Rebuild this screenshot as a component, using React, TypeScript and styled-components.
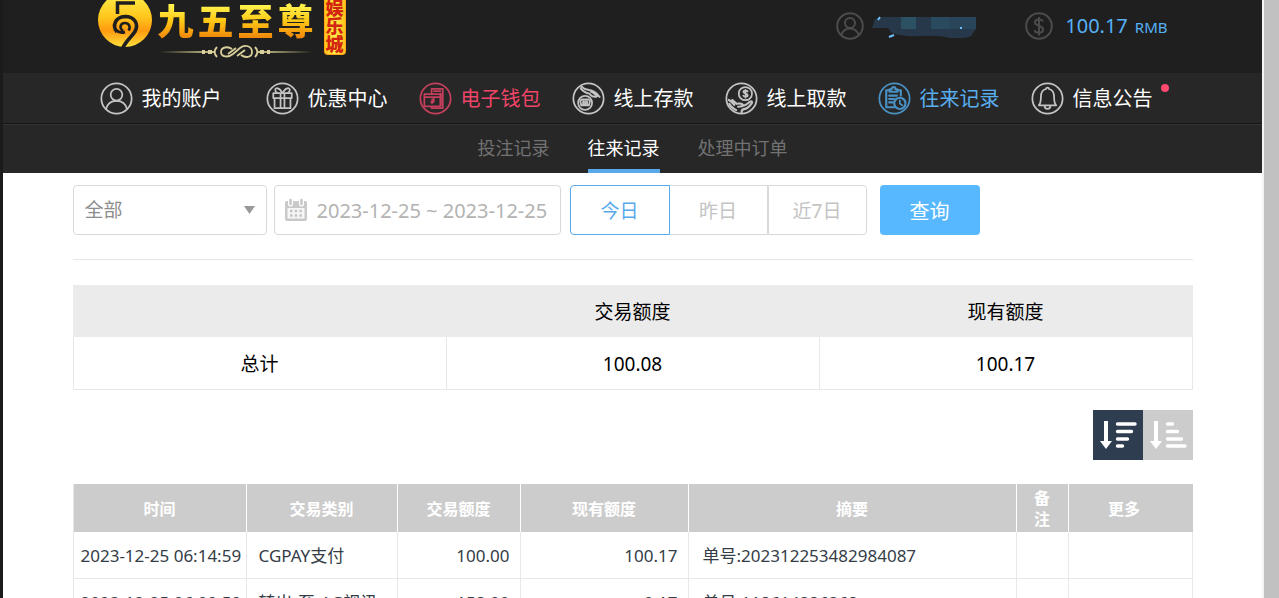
import React from "react";
import styled, { createGlobalStyle, css } from "styled-components";

const GlobalStyle = createGlobalStyle`
  *, *::before, *::after { box-sizing: border-box; }
  body {
    margin: 0;
    background: #fff;
    font-family: "Noto Sans", "Noto Sans CJK SC", sans-serif;
    color: #000;
  }
  button, input, select { font-family: inherit; }
`;

const Frame = styled.div`
  display: flex;
  height: 100vh;
  overflow: hidden;
  border-left: 3px solid #1b1a1c;
`;

const Page = styled.div`
  flex: 1;
  min-width: 0;
  overflow: hidden;
`;

const ScrollTrack = styled.div`
  width: 17px;
  flex: none;
  border-left: 2px solid #f4f4f4;
  background: #c1c1c1;
`;

const Container = styled.div`
  width: 100%;
  max-width: 1120px;
  margin: 0 auto;
`;

const Header = styled.header`
  height: 73px;
  overflow: hidden;
  background: #1f1f1f;
`;

const HeaderInner = styled(Container)`
  display: flex;
  justify-content: space-between;
  align-items: flex-start;
  padding: 0 25px;
`;

const Logo = styled.a`
  display: flex;
  align-items: flex-start;
  height: 73px;
  text-decoration: none;
`;

const LogoMark = styled.svg`
  width: 54px;
  height: 50px;
`;

const LogoWords = styled.div`
  display: flex;
  flex-direction: column;
  margin: 0 10px 0 6px;
`;

const LogoName = styled.div`
  display: flex;
  gap: 4px;
  height: 42px;
  font-family: "Noto Sans CJK SC", sans-serif;
  font-size: 36px;
  line-height: 38px;
  font-weight: 900;
  span {
    background: linear-gradient(#fff04a 15%, #ffc814 50%, #f08a0c 88%);
    background-clip: text;
    -webkit-background-clip: text;
    color: transparent;
  }
`;

const Flourish = styled.svg`
  width: 156px;
  height: 18px;
`;

const LogoBadge = styled.div`
  display: flex;
  align-items: center;
  justify-content: flex-end;
  writing-mode: vertical-rl;
  width: 22px;
  height: 55px;
  padding-bottom: 1px;
  border-radius: 0 0 4px 4px;
  border: 1px solid #ffa516;
  border-top: 0;
  background: linear-gradient(90deg, #ffc21a, #fff04a 50%, #ffc21a);
  color: #d3240f;
  font-family: "Noto Sans CJK SC", sans-serif;
  font-weight: 900;
  font-size: 18px;
  line-height: 20px;
  white-space: nowrap;
`;

const Account = styled.div`
  display: flex;
  align-items: center;
  height: 52px;
`;

const AccountIcon = styled.svg`
  width: 28px;
  height: 28px;
  fill: none;
  stroke: #4c4c4c;
  stroke-width: 2;
`;

const MaskedName = styled.svg`
  width: 106px;
  height: 24px;
  margin: 0 49px 0 6px;
`;

const Balance = styled.span`
  margin-left: 12px;
  color: #57b1f5;
  font-size: 20px;
  line-height: 28px;
  small {
    margin-left: 7px;
    font-size: 15px;
  }
`;

const Nav = styled.nav`
  height: 51px;
  background: #272727;
  border-bottom: 1px solid #151515;
`;

const NavList = styled(Container)`
  display: flex;
  gap: 31px;
  padding-left: 27px;
`;

const tones = { plain: "#fff", hot: "#f04468", active: "#58aef0" };
const iconTones = { plain: "#c4c4c4", hot: "#c43f5c", active: "#4a92c4" };
type Tone = keyof typeof tones;

const NavLink = styled.a<{ $tone: Tone; $spaced?: boolean }>`
  position: relative;
  display: flex;
  flex: none;
  align-items: center;
  gap: 9px;
  height: 50px;
  margin-right: ${(p) => (p.$spaced ? "13px" : "0")};
  color: ${(p) => tones[p.$tone]};
  font-size: 20px;
  line-height: 30px;
  text-decoration: none;
  span { padding-top: 2px; }
  svg {
    width: 33px;
    height: 33px;
    fill: none;
    stroke: ${(p) => iconTones[p.$tone]};
    stroke-width: 1.8;
    stroke-linejoin: round;
    stroke-linecap: round;
  }
`;

const Dot = styled.i`
  position: absolute;
  top: 11px;
  right: -16px;
  width: 8px;
  height: 8px;
  border-radius: 50%;
  background: #ff4a70;
`;

const SubNav = styled.nav`
  display: flex;
  justify-content: center;
  gap: 38px;
  height: 49px;
  border-top: 1px solid #343434;
  background: #272727;
`;

const SubLink = styled.a<{ $active?: boolean }>`
  height: 48px;
  border-bottom: 4px solid ${(p) => (p.$active ? "#57a9ec" : "transparent")};
  color: ${(p) => (p.$active ? "#fff" : "#727272")};
  font-size: 18px;
  line-height: 46px;
  text-decoration: none;
`;

const Content = styled(Container).attrs({ as: "main" })`
  padding-top: 12px;
`;

const Filters = styled.form`
  display: flex;
  padding-bottom: 24px;
  margin-bottom: 25px;
  border-bottom: 1px solid #e6e6e6;
`;

const field = css`
  height: 50px;
  border: 1px solid #d9d9d9;
  border-radius: 4px;
  background: #fff;
`;

const SelectBox = styled.label`
  ${field}
  display: flex;
  align-items: center;
  width: 194px;
  margin-right: 7px;
  padding: 0 11px;
  select {
    flex: 1;
    height: 48px;
    padding: 0;
    border: 0;
    appearance: none;
    background: transparent;
    color: #8c8c8c;
    font-size: 19px;
  }
  svg { width: 11px; height: 8px; fill: #999; }
`;

const DateBox = styled.label`
  ${field}
  display: flex;
  align-items: center;
  gap: 10px;
  width: 287px;
  margin-right: 9px;
  padding-left: 10px;
  svg { flex: none; width: 22px; height: 24px; }
  input {
    flex: 1;
    min-width: 0;
    height: 48px;
    padding: 0;
    border: 0;
    background: transparent;
    color: #b3b3b3;
    font-size: 20px;
  }
`;

const DayGroup = styled.div`
  display: flex;
  margin-right: 13px;
`;

const DayButton = styled.button<{ $active?: boolean }>`
  width: 99px;
  height: 50px;
  padding: 0;
  border: 1px solid ${(p) => (p.$active ? "#57a9ec" : "#d9d9d9")};
  background: #fff;
  color: ${(p) => (p.$active ? "#57a9ec" : "#c3c3c3")};
  font-size: 19px;
  &:first-child { width: 100px; border-radius: 4px 0 0 4px; }
  &:nth-child(2) { width: 98px; border-left: 0; }
  &:last-child { border-radius: 0 4px 4px 0; }
`;

const QueryButton = styled.button`
  width: 100px;
  height: 50px;
  padding: 0;
  border: 0;
  border-radius: 4px;
  background: #57b8ff;
  color: #fff;
  font-size: 20px;
`;

const SummaryTable = styled.table`
  width: 100%;
  table-layout: fixed;
  border-collapse: collapse;
  font-size: 19px;
  line-height: 28px;
  text-align: center;
  th {
    height: 51px;
    padding: 2px 0 0;
    border: 1px solid #ebebeb;
    background: #ebebeb;
    font-weight: 400;
  }
  td {
    height: 53px;
    padding: 2px 0 0;
    border: 1px solid #e8e8e8;
  }
`;

const SortBar = styled.div`
  display: flex;
  justify-content: flex-end;
  padding: 20px 0 24px;
`;

const SortButton = styled.button<{ $active?: boolean }>`
  width: 50px;
  height: 50px;
  padding: 0;
  border: 0;
  background: ${(p) => (p.$active ? "#2e3e50" : "#ccc")};
  svg {
    display: block;
    width: 50px;
    height: 50px;
    stroke: #fff;
    fill: #fff;
  }
`;

const RecordTable = styled.table`
  width: 100%;
  table-layout: fixed;
  border-collapse: separate;
  border-spacing: 0;
  border-left: 1px solid #e8e8e8;
  color: #343c46;
  th {
    height: 48px;
    padding: 2px 16px 0;
    border-right: 1px solid #fff;
    background: #ccc;
    color: #fff;
    font-size: 16px;
    line-height: 21px;
    font-weight: 700;
  }
  th:last-child {
    padding-right: 28px;
    border-right-color: #ccc;
  }
  td {
    height: 47px;
    padding: 2px 10px 0 12px;
    border-right: 1px solid #e8e8e8;
    border-bottom: 1px solid #e8e8e8;
    font-size: 17px;
    line-height: 24px;
    white-space: nowrap;
  }
  td:first-child { padding: 2px 0 0 7px; }
  td:nth-child(5) { padding-left: 14px; }
`;

const AmountCell = styled.td`
  text-align: right;
`;

const Ring = () => <circle cx="17" cy="17" r="15.6" />;

const navItems: { label: string; tone: Tone; icon: React.ReactNode }[] = [
  {
    label: "我的账户",
    tone: "plain",
    icon: (
      <>
        <circle cx="17" cy="13.2" r="6" />
        <path d="M6.2 28c1.2-5.400 5.200-8.600 10.800-8.600S26.600 22.600 27.800 28" />
      </>
    ),
  },
  {
    label: "优惠中心",
    tone: "plain",
    icon: (
      <>
        <path d="M7.500 11.500h19v5h-19zM8.800 16.500h16.400V27H8.800zM15 11.500V27M19 11.500V27" />
        <path d="M16.500 11C14 5.500 9.500 5.500 9.500 8.200c0 1.500 1 2.500 2 3M17.500 11C20 5.500 24.500 5.500 24.500 8.200c0 1.500-1 2.500-2 3" />
      </>
    ),
  },
  {
    label: "电子钱包",
    tone: "hot",
    icon: (
      <>
        <path d="M13 12V7h11.500v20H13v-1.500M15.500 9.500h6.500M22.500 12v12" />
        <path d="M5.500 12.500h16.500v12.500H5.500zM5.500 15.500h16.500" />
        <path d="M13.500 18l2 1.500M15.500 17l-2 2.500v2.500M12.500 20.500h2.500" />
      </>
    ),
  },
  {
    label: "线上存款",
    tone: "plain",
    icon: (
      <>
        <circle cx="13.500" cy="21.500" r="7.200" />
        <path d="M8.500 19.500l1.500-1.500h7l1.500 1.500-1 4.500h-8zM11.500 20V24M13.500 20V24M15.500 20V24" strokeWidth="1.900" />
        <path d="M9.500 4.500c3 3 5 3.500 8 3.800 5 .5 8 3 11 7.200M9 6.500c3 4 6 5 9 5.500 1.500 3 4 3.500 7 3.200M19.500 9.800c2.500 1 4 2.500 6.500 4.700" strokeWidth="2" />
      </>
    ),
  },
  {
    label: "线上取款",
    tone: "plain",
    icon: (
      <>
        <circle cx="21" cy="12" r="6.800" />
        <path d="M23.300 9.800c-.6-1-4.300-1.400-4.300.6 0 1.900 4.400 1.300 4.400 3.300 0 1.900-3.900 1.700-4.600.4M21.100 8v8.200" />
        <path d="M4 18.500c2 1 4 3 5.500 5M7.500 18.500l4.500 4c2-.5 6-.5 6.500 1s-2 2-5 2M18.500 24.500c3-.5 5-2.500 7-4 2-1.300 3 0 2 1.500-2.500 3.500-4.500 5.500-8 6-2 .3-2.500 1.500-2.500 3.500M4.500 22.500c1 3 4 4.500 7 6.500" strokeWidth="2.200" />
      </>
    ),
  },
  {
    label: "往来记录",
    tone: "active",
    icon: (
      <>
        <path d="M12.500 8.500H8.500V26h9M20 8.500H23.500V14" strokeWidth="2.200" />
        <path d="M12 7.500h2c0-3 4-3 4 0h2v2.500h-8zM11.500 14h8M11.500 17.500h5M11.500 21h3.500" strokeWidth="2.200" />
        <circle cx="22.500" cy="22" r="5.800" strokeWidth="2.200" />
        <path d="M22.500 19v3.300l2.500 1.700" />
      </>
    ),
  },
  {
    label: "信息公告",
    tone: "plain",
    icon: (
      <path d="M8 24c1.800-1.600 2.200-3.500 2.200-8.500 0-5.500 2.800-7.800 5.300-8.300 0-2 3-2 3 0 2.500.5 5.300 2.800 5.300 8.300 0 5 .4 6.900 2.200 8.500zM14 24.500c0 4.200 6 4.200 6 0" />
    ),
  },
];

const columns = [
  { label: "时间", width: 173 },
  { label: "交易类别", width: 151 },
  { label: "交易额度", width: 123 },
  { label: "现有额度", width: 168 },
  { label: "摘要", width: 328 },
  { label: "备注", width: 52 },
  { label: "更多", width: 124 },
];

const records = [
  { time: "2023-12-25 06:14:59", kind: "CGPAY支付", amount: "100.00", balance: "100.17", note: "单号:202312253482984087" },
  { time: "2023-12-25 06:09:59", kind: "转出-至-AG视讯", amount: "158.00", balance: "0.17", note: "单号:118614386368" },
];

export default function App() {
  return (
    <>
      <GlobalStyle />
      <Frame>
        <Page>
          <Header>
            <HeaderInner>
              <Logo href="#" aria-label="九五至尊娱乐城">
                <LogoMark viewBox="0 0 54 50">
                  <defs>
                    <linearGradient id="gold" x1="0" y1="0" x2="0" y2="1">
                      <stop offset="0" stopColor="#fff04a" />
                      <stop offset=".45" stopColor="#ffc61c" />
                      <stop offset=".7" stopColor="#ff9a10" />
                      <stop offset="1" stopColor="#ffe03a" />
                    </linearGradient>
                  </defs>
                  <circle cx="27" cy="20" r="27" fill="url(#gold)" />
                  <g fill="none" stroke="#1f1f1f">
                    <path d="M37 3H19.500V14" strokeWidth="3.500" />
                    <path d="M19 32c-5-6-2-15 8-15.500 10 0 14 8 10 15-3 5-9 9-12.500 17" strokeWidth="3.600" />
                    <path d="M25 31c-4-3-3-8 2-8 4 0 6 4 3.500 7.500" strokeWidth="2.600" />
                    <path d="M18 30c3 3 6 3 9 2" strokeWidth="3" />
                  </g>
                </LogoMark>
                <LogoWords>
                  <LogoName>
                    <span>九</span>
                    <span>五</span>
                    <span>至</span>
                    <span>尊</span>
                  </LogoName>
                  <Flourish viewBox="0 0 156 18" fill="none" stroke="#d8cf9c">
                    <defs>
                      <linearGradient id="fade">
                        <stop offset="0" stopColor="#1f1f1f" />
                        <stop offset="1" stopColor="#cfc68c" />
                      </linearGradient>
                      <linearGradient id="fadeOut">
                        <stop offset="0" stopColor="#cfc68c" />
                        <stop offset="1" stopColor="#1f1f1f" />
                      </linearGradient>
                    </defs>
                    <path d="M2 9h54v2H2z" fill="url(#fade)" stroke="none" />
                    <path d="M100 9h54v2h-54z" fill="url(#fadeOut)" stroke="none" />
                    <path d="M44 10h3M50 10h4M102 10h4M109 10h3" strokeWidth="4" />
                    <path d="M59 5c-3 3-3 7 0 10M97 5c3 3 3 7 0 10" strokeWidth="2" />
                    <path d="M74 7c-4-3-11-2-11 3s7 6 12 2l7-6c5-4 12-2 12 4s-7 6-11 3M70 12l8-6M79 14l8-6" strokeWidth="1.800" />
                  </Flourish>
                </LogoWords>
                <LogoBadge>娱乐城</LogoBadge>
              </Logo>
              <Account>
                <AccountIcon viewBox="0 0 28 28">
                  <circle cx="14" cy="14" r="12.800" />
                  <circle cx="14" cy="11" r="5" />
                  <path d="M5 23c2-4.500 5-6.500 9-6.500s7 2 9 6.500" />
                </AccountIcon>
                <MaskedName viewBox="0 0 106 24" role="img" aria-label="用户名">
                  <path d="M5 5l8-2h93v12l-5 7q-3 2-8 2H80q-12-3-30-2-16 1-28-3l-4-5H2z" fill="#26384a" />
                  <path d="M31 3h15v12H31z" fill="#2c5163" />
                  <path d="M61 3h18v12H61z" fill="#2a4a60" />
                  <path d="M79 3h27v12H79z" fill="#294559" />
                  <path d="M8 6l2-3M19 23l5-2M90 14h2" stroke="#6cc0f5" strokeWidth="2" />
                </MaskedName>
                <AccountIcon viewBox="0 0 28 28">
                  <circle cx="14" cy="14" r="12.800" />
                  <path d="M18 9.500c-1-2.500-8-3-8 1s8 2.500 8 7-7.500 4-8.500.8M14 5v18.500" />
                </AccountIcon>
                <Balance>
                  100.17<small>RMB</small>
                </Balance>
              </Account>
            </HeaderInner>
          </Header>
          <Nav>
            <NavList>
              {navItems.map((item, i) => (
                <NavLink key={item.label} href="#" $tone={item.tone} $spaced={i === 0}>
                  <svg viewBox="0 0 34 34" aria-hidden="true">
                    <Ring />
                    {item.icon}
                  </svg>
                  <span>{item.label}</span>
                  {i === navItems.length - 1 && <Dot />}
                </NavLink>
              ))}
            </NavList>
          </Nav>
          <SubNav>
            <SubLink href="#">投注记录</SubLink>
            <SubLink href="#" $active>往来记录</SubLink>
            <SubLink href="#">处理中订单</SubLink>
          </SubNav>
          <Content>
            <Filters onSubmit={(e) => e.preventDefault()}>
              <SelectBox>
                <select aria-label="交易类别">
                  <option>全部</option>
                </select>
                <svg viewBox="0 0 11 8"><path d="M0 0h11L5.500 8z" /></svg>
              </SelectBox>
              <DateBox>
                <svg viewBox="0 0 22 24">
                  <path d="M0 5q0-2 2-2h18q2 0 2 2v16q0 2-2 2H2q-2 0-2-2z" fill="#c9c9c9" />
                  <path d="M2.500 10h17v10.500h-17z" fill="#f6f6f6" />
                  <path d="M5 13h12M5 17.500h12" stroke="#c4c4c4" strokeWidth="2.500" strokeDasharray="2.500 2.200" />
                  <path d="M5.500 1v5M16.500 1v5" stroke="#fff" strokeWidth="5" strokeLinecap="round" />
                  <path d="M5.500 2v4M16.500 2v4" stroke="#c4c4c4" strokeWidth="2.400" strokeLinecap="round" />
                </svg>
                <input type="text" aria-label="日期" defaultValue="2023-12-25 ~ 2023-12-25" />
              </DateBox>
              <DayGroup>
                <DayButton type="button" $active>今日</DayButton>
                <DayButton type="button">昨日</DayButton>
                <DayButton type="button">近7日</DayButton>
              </DayGroup>
              <QueryButton type="submit">查询</QueryButton>
            </Filters>
            <SummaryTable>
              <thead>
                <tr>
                  <th />
                  <th scope="col">交易额度</th>
                  <th scope="col">现有额度</th>
                </tr>
              </thead>
              <tbody>
                <tr>
                  <td>总计</td>
                  <td>100.08</td>
                  <td>100.17</td>
                </tr>
              </tbody>
            </SummaryTable>
            <SortBar>
              <SortButton type="button" aria-label="降序" $active>
                <svg viewBox="0 0 50 50">
                  <path d="M13 11v21" strokeWidth="4" />
                  <path d="M7 31h12l-6 8z" stroke="none" />
                  <path d="M24.500 14h17.500M24.500 21.500h14M24.500 29h10M24.500 36h5" strokeWidth="3.400" strokeLinecap="round" />
                </svg>
              </SortButton>
              <SortButton type="button" aria-label="升序">
                <svg viewBox="0 0 50 50">
                  <path d="M13 11v21" strokeWidth="4" />
                  <path d="M7 31h12l-6 8z" stroke="none" />
                  <path d="M24.500 14h5M24.500 21.500h10M24.500 29h14M24.500 36h17.500" strokeWidth="3.400" strokeLinecap="round" />
                </svg>
              </SortButton>
            </SortBar>
            <RecordTable>
              <colgroup>
                {columns.map((c) => (
                  <col key={c.label} style={{ width: c.width }} />
                ))}
              </colgroup>
              <thead>
                <tr>
                  {columns.map((c) => (
                    <th key={c.label} scope="col">{c.label}</th>
                  ))}
                </tr>
              </thead>
              <tbody>
                {records.map((r) => (
                  <tr key={r.time}>
                    <td>{r.time}</td>
                    <td>{r.kind}</td>
                    <AmountCell>{r.amount}</AmountCell>
                    <AmountCell>{r.balance}</AmountCell>
                    <td>{r.note}</td>
                    <td />
                    <td />
                  </tr>
                ))}
              </tbody>
            </RecordTable>
          </Content>
        </Page>
        <ScrollTrack />
      </Frame>
    </>
  );
}
